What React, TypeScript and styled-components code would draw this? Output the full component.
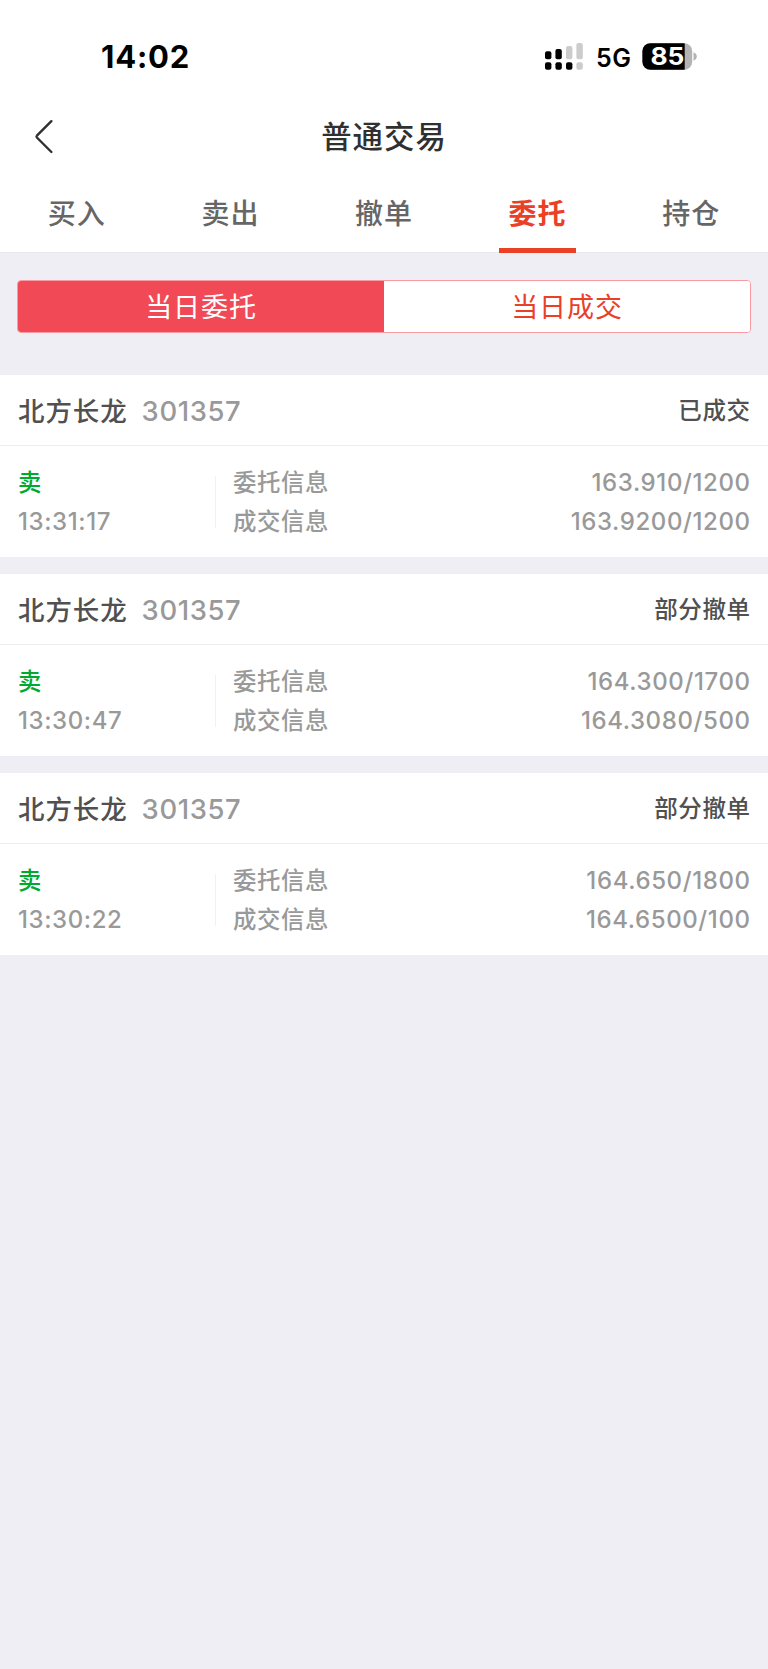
import React from "react";
import styled, { createGlobalStyle } from "styled-components";

const GlobalStyle = createGlobalStyle`
  html, body { margin: 0; padding: 0; background: #efeef4; }
  * { box-sizing: border-box; }
`;

const Screen = styled.div`
  width: 768px;
  min-height: 1669px;
  display: flex;
  flex-direction: column;
  background: #efeef4;
  font-family: Inter, "Noto Sans CJK SC", sans-serif;
  font-weight: 500;
  white-space: nowrap;
`;

const Header = styled.header`
  background: #fff;
  height: 253px;
  border-bottom: 1px solid #e9e9ec;
`;

const StatusBar = styled.div`
  height: 100px;
  padding: 14px 70px 0 101px;
  display: flex;
  align-items: center;
  justify-content: space-between;
  color: #000;
`;

const Clock = styled.span`
  font-size: 31px;
  font-weight: 750;
  line-height: 36px;
  letter-spacing: 0.8px;
`;

const StatusIcons = styled.div`
  display: flex;
  align-items: center;
`;

const Network = styled.span`
  margin-left: 12px;
  width: 46px;
  font-size: 25px;
  font-weight: 600;
  line-height: 28px;
  letter-spacing: 0.5px;
  padding-top: 2px;
`;

const NavBar = styled.div`
  height: 74px;
  padding: 0 34px;
  display: grid;
  grid-template-columns: 60px 1fr 60px;
  align-items: center;
`;

const BackButton = styled.button`
  border: 0;
  padding: 0;
  background: none;
  height: 36px;
  display: flex;
  align-items: center;
`;

const Title = styled.h1`
  margin: 0;
  text-align: center;
  font-size: 30.4px;
  font-weight: 500;
  letter-spacing: 1px;
  line-height: 40px;
  color: #303030;
`;

const Tabs = styled.nav`
  height: 79px;
  display: grid;
  grid-template-columns: repeat(5, 1fr);
  justify-items: center;
`;

const Tab = styled.div<{ $active?: boolean }>`
  width: 77px;
  height: 79px;
  text-align: center;
  font-size: 28px;
  letter-spacing: 1px;
  line-height: 80px;
  font-weight: ${(p) => (p.$active ? 700 : 500)};
  color: ${(p) => (p.$active ? "#ea4025" : "#666")};
  border-bottom: ${(p) => (p.$active ? "5px solid #ea4025" : "0")};
`;

const Segmented = styled.div`
  margin: 27px 17px 42px 17px;
  height: 53px;
  display: flex;
  border: 1px solid #f79aa2;
  border-radius: 4px;
  overflow: hidden;
  background: #fff;
`;

const Segment = styled.div<{ $active?: boolean }>`
  flex: 1;
  text-align: center;
  font-size: 27px;
  font-weight: 400;
  letter-spacing: 0.9px;
  line-height: 54px;
  background: ${(p) => (p.$active ? "#f24957" : "#fff")};
  color: ${(p) => (p.$active ? "#fff" : "#ea4025")};
`;

const OrderList = styled.main`
  display: flex;
  flex-direction: column;
  gap: 17px;
`;

const OrderCard = styled.article`
  height: 182px;
  background: #fff;
`;

const OrderHead = styled.div`
  height: 71px;
  padding: 2px 18px 0;
  display: flex;
  align-items: center;
  border-bottom: 1px solid #ededef;
`;

const StockName = styled.span`
  font-size: 26.5px;
  letter-spacing: 0.9px;
  line-height: 36px;
  color: #505050;
`;

const StockCode = styled.span`
  margin-left: 14px;
  font-size: 27.4px;
  letter-spacing: 0.6px;
  line-height: 36px;
  color: #999;
`;

const OrderStatus = styled.span`
  margin-left: auto;
  font-size: 23.5px;
  letter-spacing: 0.6px;
  margin-right: -0.6px;
  line-height: 36px;
  color: #505050;
`;

const OrderBody = styled.div`
  height: 111px;
  padding: 17px 18px 0;
  display: grid;
  grid-template-columns: 197px 1fr auto;
  font-size: 24px;
  letter-spacing: 0.6px;
  line-height: 39px;
  color: #999;
`;

const Column = styled.div`
  display: flex;
  flex-direction: column;
`;

const Details = styled(Column)`
  position: relative;
  padding-left: 18px;
  font-size: 23.4px;
  letter-spacing: 0.6px;

  &::before {
    content: "";
    position: absolute;
    left: 0;
    top: 13px;
    width: 1px;
    height: 52px;
    background: #f1f1f3;
  }
`;

const Figures = styled(Column)`
  text-align: right;
  margin-right: -0.6px;
`;

const Side = styled.span`
  color: #00a92f;
  font-size: 23.4px;
`;

interface Order {
  name: string;
  code: string;
  status: string;
  time: string;
  placed: string;
  filled: string;
}

const orders: Order[] = [
  { name: "北方长龙", code: "301357", status: "已成交", time: "13:31:17", placed: "163.910/1200", filled: "163.9200/1200" },
  { name: "北方长龙", code: "301357", status: "部分撤单", time: "13:30:47", placed: "164.300/1700", filled: "164.3080/500" },
  { name: "北方长龙", code: "301357", status: "部分撤单", time: "13:30:22", placed: "164.650/1800", filled: "164.6500/100" },
];

const tabs = ["买入", "卖出", "撤单", "委托", "持仓"];

const SignalIcon = () => (
  <svg width="39" height="28" viewBox="0 0 39 28">
    <g fill="#000">
      <rect x="0" y="8.3" width="6.4" height="7.9" rx="2" />
      <rect x="10.4" y="6" width="6.4" height="10.2" rx="2" />
      <rect x="0" y="19.3" width="6.4" height="7.4" rx="2" />
      <rect x="10.4" y="19.3" width="6.4" height="7.4" rx="2" />
      <rect x="21" y="19.3" width="6.4" height="7.4" rx="2" />
    </g>
    <g fill="#ccc">
      <rect x="21" y="3" width="6.4" height="13.2" rx="2" />
      <rect x="31.4" y="0" width="6.4" height="16.2" rx="2" />
      <rect x="31.4" y="19.3" width="6.4" height="7.4" rx="2" />
    </g>
  </svg>
);

const BatteryIcon = () => (
  <svg width="56" height="28" viewBox="0 0 56 28">
    <defs>
      <clipPath id="battery-body">
        <rect x="0.4" y="0.2" width="49.8" height="26.6" rx="8" />
      </clipPath>
    </defs>
    <g clipPath="url(#battery-body)">
      <rect width="51" height="28" fill="#b3b3b3" />
      <rect width="42.7" height="28" fill="#000" />
    </g>
    <path d="M51.5 9.3c2 .6 3.3 2.3 3.3 4.2s-1.3 3.6-3.3 4.200z" fill="#b3b3b3" />
    <text x="25.4" y="22.2" textAnchor="middle" fill="#fff" fontFamily="Inter" fontSize="24" fontWeight="700" textLength="34" lengthAdjust="spacingAndGlyphs">
      85
    </text>
  </svg>
);

export default function App() {
  return (
    <Screen>
      <GlobalStyle />
      <Header>
        <StatusBar>
          <Clock>14:02</Clock>
          <StatusIcons>
            <SignalIcon />
            <Network>5G</Network>
            <BatteryIcon />
          </StatusIcons>
        </StatusBar>
        <NavBar>
          <BackButton aria-label="返回">
            <svg width="20" height="36" viewBox="0 0 20 36" fill="none" stroke="#303030" strokeWidth="2.4" strokeLinecap="round" strokeLinejoin="round">
              <path d="M17.400 2.2 2.9 16.7Q2.1 17.6 2.9 18.500L17.400 33" />
            </svg>
          </BackButton>
          <Title>普通交易</Title>
        </NavBar>
        <Tabs>
          {tabs.map((label) => (
            <Tab key={label} $active={label === "委托"}>
              {label}
            </Tab>
          ))}
        </Tabs>
      </Header>
      <Segmented>
        <Segment $active>当日委托</Segment>
        <Segment>当日成交</Segment>
      </Segmented>
      <OrderList>
        {orders.map((o) => (
          <OrderCard key={o.time}>
            <OrderHead>
              <StockName>{o.name}</StockName>
              <StockCode>{o.code}</StockCode>
              <OrderStatus>{o.status}</OrderStatus>
            </OrderHead>
            <OrderBody>
              <Column>
                <Side>卖</Side>
                <span>{o.time}</span>
              </Column>
              <Details>
                <span>委托信息</span>
                <span>成交信息</span>
              </Details>
              <Figures>
                <span>{o.placed}</span>
                <span>{o.filled}</span>
              </Figures>
            </OrderBody>
          </OrderCard>
        ))}
      </OrderList>
    </Screen>
  );
}
